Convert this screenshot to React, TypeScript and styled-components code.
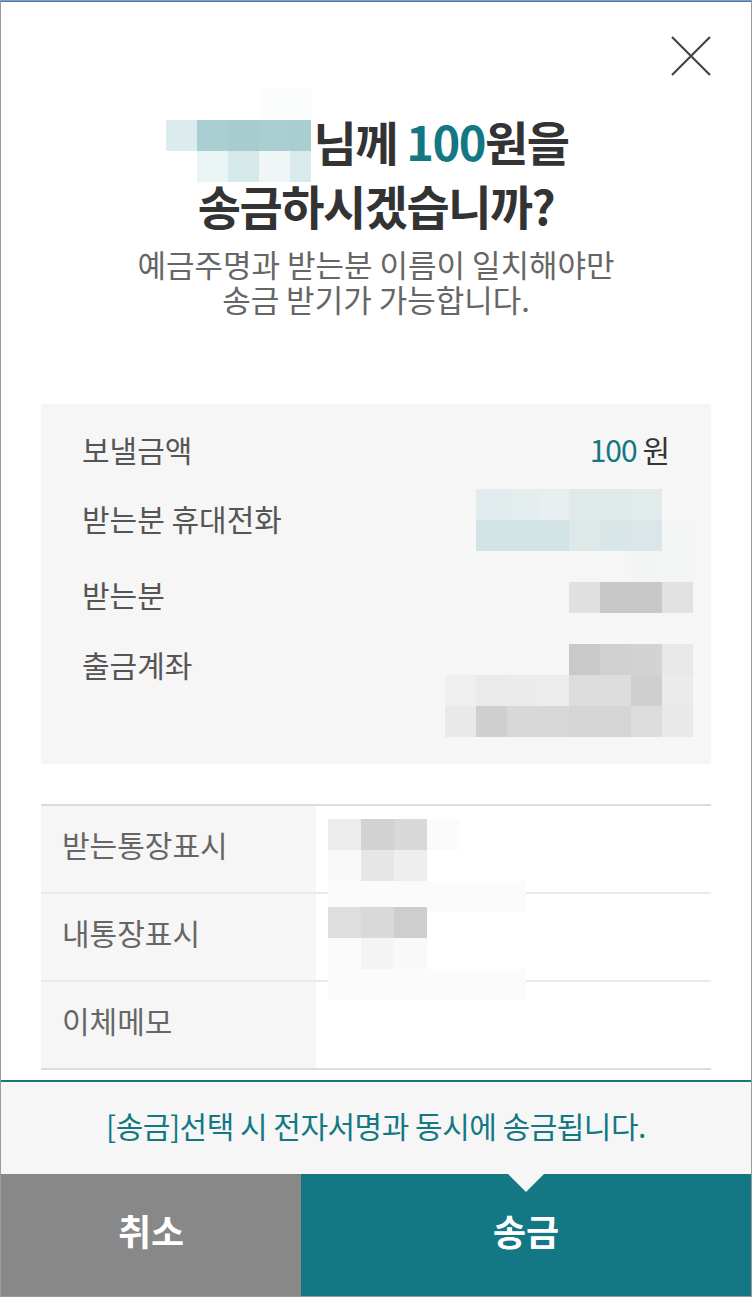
import React from 'react';
import styled, { createGlobalStyle } from 'styled-components';

const TEAL = '#147884';

const GlobalStyle = createGlobalStyle`
  html, body {
    margin: 0;
    padding: 0;
    background: #ffffff;
  }
  body {
    font-family: "Noto Sans CJK KR", "Noto Sans", sans-serif;
    color: #333;
  }
  * { box-sizing: border-box; }
`;

const Frame = styled.div`
  width: 752px;
  height: 1297px;
  border: 1px solid #9a9a9a;
  box-shadow: inset 0 1px 0 #2f7ad0;
  display: flex;
  flex-direction: column;
  overflow: hidden;
`;

const Content = styled.div`
  flex: 1;
  padding: 0 40px;
  display: flex;
  flex-direction: column;
`;

const TopBar = styled.div`
  display: flex;
  justify-content: flex-end;
  padding-top: 35px;
`;

const CloseButton = styled.button`
  width: 40px;
  height: 40px;
  padding: 0;
  border: 0;
  background: none;
  cursor: pointer;
  display: block;
`;

const Title = styled.h1`
  margin: 33px 0 0;
  text-align: center;
  font-size: 47px;
  line-height: 64px;
  font-weight: 700;
  letter-spacing: -1.5px;
  color: #333;
`;

const TitleLine = styled.div<{ $shift?: number }>`
  padding-right: ${p => p.$shift ?? 0}px;
`;

const Accent = styled.span`
  color: ${TEAL};
`;

const NameBlur = styled.span`
  display: inline-block;
  vertical-align: top;
  margin: -20px 3px -30px 0;
  letter-spacing: 0;
`;

const Notice = styled.p`
  margin: 9px 0 0;
  text-align: center;
  font-size: 31px;
  line-height: 35px;
  letter-spacing: 0;
  color: #666;
`;

const Summary = styled.div`
  margin-top: 88px;
  background: #f6f6f6;
  padding: 25px 18px 27px 41px;
  display: flex;
  flex-direction: column;
`;

const SumRow = styled.div<{ $mt?: number; $top?: boolean }>`
  display: flex;
  justify-content: space-between;
  align-items: ${p => (p.$top ? 'flex-start' : 'center')};
  margin-top: ${p => p.$mt ?? 0}px;
`;

const SumLabel = styled.span<{ $lh?: number }>`
  font-size: 30px;
  line-height: ${p => p.$lh ?? 40}px;
  letter-spacing: 0;
  color: #555;
  white-space: nowrap;
`;

const Amount = styled.span`
  margin-right: 24px;
  font-size: 30px;
  line-height: 40px;
  letter-spacing: -1px;
  color: #333;
`;

const MosaicGrid = styled.div<{ $cols: string; $row: number }>`
  display: grid;
  grid-template-columns: ${p => p.$cols};
  grid-auto-rows: ${p => p.$row}px;
`;

const MosaicCell = styled.span<{ $c: string }>`
  background: ${p => p.$c || 'transparent'};
`;

const Table = styled.div`
  margin-top: 40px;
  border-top: 2px solid #dcdcdc;
  border-bottom: 2px solid #dcdcdc;
`;

const TableRow = styled.div<{ $last?: boolean }>`
  display: grid;
  grid-template-columns: 275px 1fr;
  grid-template-rows: 100%;
  height: ${p => (p.$last ? 86 : 88)}px;
  border-bottom: ${p => (p.$last ? 'none' : '2px solid #e9e9e9')};
`;

const TableHead = styled.div`
  background: #f6f6f6;
  padding: 0 0 10px 21px;
  display: flex;
  align-items: center;
  font-size: 30px;
  letter-spacing: 0;
  color: #666;
`;

const TableCell = styled.div`
  padding: 13px 0 0 12px;
  min-height: 0;
`;

const Footer = styled.div`
  margin-top: auto;
`;

const SignNotice = styled.div`
  height: 94px;
  padding-bottom: 6px;
  border-top: 2px solid ${TEAL};
  background: #f6f6f6;
  display: flex;
  align-items: center;
  justify-content: center;
  font-size: 30px;
  letter-spacing: -0.5px;
  color: ${TEAL};
`;

const ButtonBar = styled.div`
  display: grid;
  grid-template-columns: 300px 1fr;
  height: 122px;
`;

const ActionButton = styled.button<{ $primary?: boolean }>`
  position: relative;
  border: 0;
  margin: 0;
  padding: 0 0 10px;
  background: ${p => (p.$primary ? TEAL : '#888888')};
  color: #fff;
  font-family: inherit;
  font-size: 36px;
  font-weight: 700;
  letter-spacing: 0;
  cursor: pointer;

  ${p =>
    p.$primary &&
    `&::before {
      content: '';
      position: absolute;
      top: 0;
      left: 50%;
      margin-left: -18px;
      border-left: 18px solid transparent;
      border-right: 18px solid transparent;
      border-top: 18px solid #f6f6f6;
    }`}
`;

type Props = { cols: string; row?: number; rows: string[][] };

function Mosaic({ cols, row = 31, rows }: Props) {
  return (
    <MosaicGrid $cols={cols} $row={row}>
      {rows.map((r, i) => r.map((c, j) => <MosaicCell key={i + '-' + j} $c={c} />))}
    </MosaicGrid>
  );
}

const nameRows = [
  ['', '', '', '#fbfdfd', '#fbfdfd'],
  ['#dcebed', '#a9cfd3', '#a7ccd0', '#aacfd3', '#a9ced2'],
  ['', '#ebf4f5', '#d5e8ea', '#f0f6f6', '#d8eaeb'],
];

const phoneRows = [
  ['#e2ebed', '#e4edee', '#e6eeef', '#e1eaeb', '#e1eaeb', '#e2ebec', ''],
  ['#d2e3e6', '#d2e3e6', '#d2e3e6', '#dde8e9', '#d9e6e7', '#dae6e7', '#f4f5f5'],
  ['', '', '', '', '', '#f3f4f4', '#f4f5f5'],
];

const receiverRows = [['#e0e0e0', '#c8c8c8', '#c8c8c8', '#e2e2e2']];

const accountRows = [
  ['', '', '', '', '#c9c9c9', '#d0d0d0', '#d3d3d3', '#e8e8e8'],
  ['#efefef', '#eaeaea', '#ebebeb', '#ececec', '#dcdcdc', '#dcdcdc', '#cfcfcf', '#ebebeb'],
  ['#e9e9e9', '#cfcfcf', '#d8d8d8', '#d8d8d8', '#d5d5d5', '#d5d5d5', '#dcdcdc', '#e9e9e9'],
];

const memoA = [
  ['#ececec', '#d2d2d2', '#d8d8d8', '#fbfbfb', '', ''],
  ['#f9f9f9', '#e6e6e6', '#eeeeee', '', '', ''],
  ['#fbfbfb', '#fbfbfb', '#fbfbfb', '#fbfbfb', '#fbfbfb', '#fbfbfb'],
];

const memoB = [
  ['#dedede', '#d9d9d9', '#cecece', '', '', ''],
  ['#fbfbfb', '#f4f4f4', '#f9f9f9', '', '', ''],
  ['#fbfbfb', '#fbfbfb', '#fbfbfb', '#fbfbfb', '#fbfbfb', '#fbfbfb'],
];

function CloseIcon() {
  return (
    <svg width="40" height="40" viewBox="0 0 40 40">
      <path d="M1 1 L39 39 M39 1 L1 39" stroke="#444" strokeWidth="2.2" fill="none" />
    </svg>
  );
}

export default function App() {
  return (
    <>
      <GlobalStyle />
      <Frame>
        <Content>
          <TopBar>
            <CloseButton aria-label="닫기">
              <CloseIcon />
            </CloseButton>
          </TopBar>

          <Title>
            <TitleLine $shift={18}>
              <NameBlur>
                <Mosaic cols="repeat(4, 31px) 21px" rows={nameRows} />
              </NameBlur>
              님께 <Accent>100</Accent>원을
            </TitleLine>
            <TitleLine>송금하시겠습니까?</TitleLine>
          </Title>

          <Notice>
            예금주명과 받는분 이름이 일치해야만
            <br />
            송금 받기가 가능합니다.
          </Notice>

          <Summary>
            <SumRow>
              <SumLabel>보낼금액</SumLabel>
              <Amount>
                <Accent>100</Accent> 원
              </Amount>
            </SumRow>
            <SumRow $mt={20} $top>
              <SumLabel $lh={58}>받는분 휴대전화</SumLabel>
              <Mosaic cols="repeat(7, 31px)" rows={phoneRows} />
            </SumRow>
            <SumRow $top>
              <SumLabel $lh={24}>받는분</SumLabel>
              <Mosaic cols="repeat(4, 31px)" rows={receiverRows} />
            </SumRow>
            <SumRow $mt={31} $top>
              <SumLabel $lh={40}>출금계좌</SumLabel>
              <Mosaic cols="repeat(8, 31px)" rows={accountRows} />
            </SumRow>
          </Summary>

          <Table>
            <TableRow>
              <TableHead>받는통장표시</TableHead>
              <TableCell>
                <Mosaic cols="repeat(6, 33px)" rows={memoA} />
              </TableCell>
            </TableRow>
            <TableRow>
              <TableHead>내통장표시</TableHead>
              <TableCell>
                <Mosaic cols="repeat(6, 33px)" rows={memoB} />
              </TableCell>
            </TableRow>
            <TableRow $last>
              <TableHead>이체메모</TableHead>
              <TableCell />
            </TableRow>
          </Table>
        </Content>

        <Footer>
          <SignNotice>[송금]선택 시 전자서명과 동시에 송금됩니다.</SignNotice>
          <ButtonBar>
            <ActionButton>취소</ActionButton>
            <ActionButton $primary>송금</ActionButton>
          </ButtonBar>
        </Footer>
      </Frame>
    </>
  );
}
